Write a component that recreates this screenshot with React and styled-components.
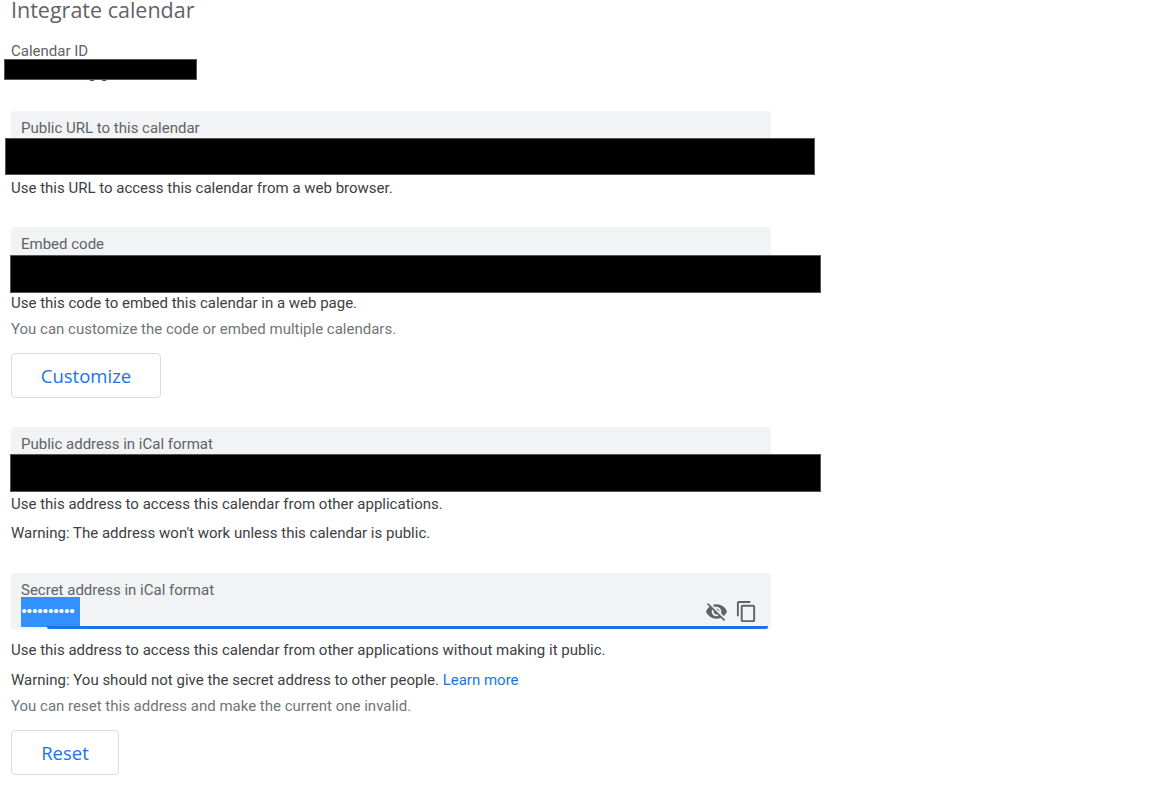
import styled, { createGlobalStyle } from "styled-components";

const Global = createGlobalStyle`
    html, body {
        margin: 0;
        padding: 0;
        background: #fff;
        overflow: hidden;
    }
    body {
        font-family: Roboto, "Liberation Sans", sans-serif;
        font-size: 15px;
        color: #3c4043;
    }
`
const Page = styled.div`
    position: relative;
    width: 1175px;
    height: 787px;
    padding: 0 0 0 11px;
    box-sizing: border-box;
    overflow: hidden;
`
const Title = styled.h1`
    margin: 0;
    height: 21px;
    line-height: 19px;
    font-family: "Open Sans", Roboto, sans-serif;
    font-size: 21.5px;
    font-weight: 400;
    color: #5f6368;
`
const IdBlock = styled.div`
    position: relative;
    margin-top: 20px;
    height: 70px;
`
const IdLabel = styled.div`
    line-height: 21px;
    color: #5f6368;
`
const IdValue = styled.div`
    padding: 1px 0 0 77px;
    line-height: 20px;
    color: #3c4043;
`
const Field = styled.div`
    position: relative;
    width: 760px;
    height: 56px;
    box-sizing: border-box;
    padding: 8px 10px 0;
    background: #f1f3f4;
    border-radius: 4px 4px 0 0;
    margin-top: ${p => p.$top || 0}px;
`
const FieldLabel = styled.div`
    line-height: 19px;
    color: #5f6368;
`
const Redaction = styled.div`
    position: absolute;
    left: ${p => p.$left}px;
    top: ${p => p.$top}px;
    width: ${p => p.$width}px;
    height: ${p => p.$height}px;
    box-sizing: border-box;
    background: #000;
    border: 1px solid #555;
`
const Help = styled.div`
    padding-top: 2px;
    line-height: 18px;
    margin-top: ${p => p.$top || 0}px;
    color: ${p => p.$dim ? "#70757a" : "#3c4043"};
`
const LearnLink = styled.a`
    color: #1a73e8;
    text-decoration: none;
`
const Button = styled.button`
    display: block;
    width: ${p => p.$width}px;
    height: 45px;
    margin-top: 15px;
    padding: 0;
    background: #fff;
    border: 1px solid #dadce0;
    border-radius: 4px;
    font-family: "Open Sans", Roboto, sans-serif;
    font-size: 18.5px;
    font-weight: 500;
    color: #1a73e8;
`
const Secret = styled.span`
    position: absolute;
    left: 10px;
    top: 24px;
    width: 59px;
    height: 30px;
    background: #3390ff;
    color: #fff;
    font-size: 17px;
    font-weight: 700;
    line-height: 29px;
    letter-spacing: -0.78px;
    overflow: hidden;
    white-space: nowrap;
`
const Underline = styled.div`
    position: absolute;
    left: 36px;
    right: 3px;
    bottom: 0;
    height: 3px;
    background: #1a73e8;
    border-radius: 0 0 2px 2px;
`
const Icons = styled.div`
    position: absolute;
    right: 13px;
    top: 27px;
    display: flex;
    align-items: center;
    gap: 7px;
`
const Icon = styled.svg`
    width: 23px;
    height: 23px;
    fill: #5f6368;
    display: block;
`

function EyeOff() {
    return (
        <Icon viewBox="0 0 24 24">
            <path d="M12 7c2.76 0 5 2.24 5 5 0 .65-.13 1.26-.36 1.83l2.92 2.92c1.51-1.26 2.7-2.89 3.43-4.75-1.73-4.39-6-7.5-11-7.5-1.4 0-2.74.25-3.98.7l2.16 2.16C10.74 7.13 11.35 7 12 7zM2 4.27l2.28 2.28.46.46C3.08 8.3 1.78 10.02 1 12c1.73 4.39 6 7.5 11 7.5 1.55 0 3.03-.3 4.38-.84l.42.42L19.73 22 21 20.73 3.27 3 2 4.27zM7.53 9.8l1.55 1.55c-.05.21-.08.43-.08.65 0 1.66 1.34 3 3 3 .22 0 .44-.03.65-.08l1.55 1.55c-.67.33-1.41.53-2.2.53-2.76 0-5-2.24-5-5 0-.79.2-1.53.53-2.2zm4.31-.78l3.15 3.15.02-.16c0-1.66-1.34-3-3-3l-.17.01z" />
        </Icon>
    )
}

function CopyIcon() {
    return (
        <Icon viewBox="0 0 24 24">
            <path d="M16 1H4c-1.1 0-2 .9-2 2v14h2V3h12V1zm3 4H8c-1.1 0-2 .9-2 2v14c0 1.1.9 2 2 2h11c1.1 0 2-.9 2-2V7c0-1.1-.9-2-2-2zm0 16H8V7h11v14z" />
        </Icon>
    )
}

function App() {
    return (
        <Page>
            <Global />
            <Title>Integrate calendar</Title>

            <IdBlock>
                <IdLabel>Calendar ID</IdLabel>
                <IdValue>g g</IdValue>
                <Redaction $left={-7} $top={18} $width={193} $height={21} />
            </IdBlock>

            <Field>
                <FieldLabel>Public URL to this calendar</FieldLabel>
                <Redaction $left={-6} $top={27} $width={810} $height={37} />
            </Field>
            <Help $top={10}>Use this URL to access this calendar from a web browser.</Help>

            <Field $top={30}>
                <FieldLabel>Embed code</FieldLabel>
                <Redaction $left={-1} $top={28} $width={811} $height={38} />
            </Field>
            <Help $top={9}>Use this code to embed this calendar in a web page.</Help>
            <Help $top={6} $dim>You can customize the code or embed multiple calendars.</Help>
            <Button $width={150}>Customize</Button>

            <Field $top={29}>
                <FieldLabel>Public address in iCal format</FieldLabel>
                <Redaction $left={-1} $top={27} $width={811} $height={38} />
            </Field>
            <Help $top={10}>Use this address to access this calendar from other applications.</Help>
            <Help $top={9}>Warning: The address won't work unless this calendar is public.</Help>

            <Field $top={31}>
                <FieldLabel>Secret address in iCal format</FieldLabel>
                <Secret>••••••••••</Secret>
                <Icons>
                    <EyeOff />
                    <CopyIcon />
                </Icons>
                <Underline />
            </Field>
            <Help $top={10}>Use this address to access this calendar from other applications without making it public.</Help>
            <Help $top={10}>
                Warning: You should not give the secret address to other people. <LearnLink>Learn more</LearnLink>
            </Help>
            <Help $top={6} $dim>You can reset this address and make the current one invalid.</Help>
            <Button $width={108}>Reset</Button>
        </Page>
    )
}

export default App;
